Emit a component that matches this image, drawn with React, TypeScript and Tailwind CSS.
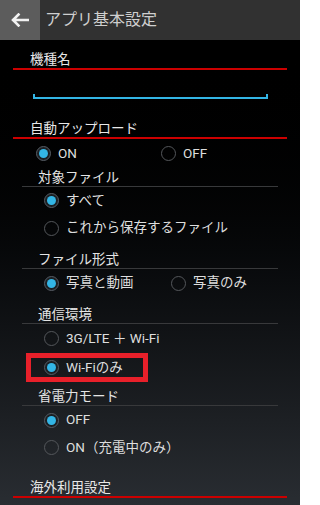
const FONT = { fontFamily: 'Roboto, "Noto Sans CJK JP", sans-serif' };

function Radio({ checked }: { checked?: boolean }) {
  if (checked) {
    return (
      <span className="w-[15px] h-[15px] shrink-0 rounded-full border border-[#565c64] bg-[#1b1f23] flex items-center justify-center">
        <span className="w-[9px] h-[9px] rounded-full bg-[#33b5e5]" />
      </span>
    );
  }
  return <span className="w-[15px] h-[15px] shrink-0 rounded-full border border-[#54575b]" />;
}

function Option({ label, checked }: { label: string; checked?: boolean }) {
  return (
    <span className="flex items-center gap-[7px]">
      <Radio checked={checked} />
      <span className="text-[13.5px] text-[#dedede] leading-none">{label}</span>
    </span>
  );
}

// red underlined section heading
function Section({ title, className = '' }: { title: string; className?: string }) {
  return (
    <div className={className}>
      <div className="pl-[30px] text-[13.5px] leading-[18px] text-[#e8e8e8]">{title}</div>
      <div className="mx-[13px] h-[2px] bg-[#cc0000]" />
    </div>
  );
}

// grey underlined sub heading
function SubHeading({ title, className = '' }: { title: string; className?: string }) {
  return (
    <div className={className}>
      <div className="pl-[38px] text-[13.5px] leading-[18px] text-[#e4e4e4]">{title}</div>
      <div className="ml-[22px] mr-[22px] h-px bg-[#38393b]" />
    </div>
  );
}

export default function App() {
  return (
    <div className="w-[300px] h-[505px] overflow-hidden flex flex-col" style={FONT}>
      {/* Action bar */}
      <div className="h-[40px] shrink-0 flex bg-[#313131]">
        <div className="w-[40px] h-full bg-[#5c5c5c] flex items-center justify-center">
          <svg width="18" height="14" viewBox="0 0 18 14" fill="none">
            <path d="M17 7H2.5M7.5 1.5L2 7l5.5 5.5" stroke="#f2f2f2" strokeWidth="2.6" strokeLinecap="square" />
          </svg>
        </div>
        <div className="flex items-center pl-[5px] text-[16px] text-[#cfcfcf]">アプリ基本設定</div>
      </div>

      {/* Content */}
      <div className="flex-1 bg-gradient-to-b from-[#000000] to-[#292d32]">
        <Section title="機種名" className="mt-[10px]" />

        <div className="mt-[24px] ml-[33px] mr-[32px] h-[5px] border-x-2 border-b-2 border-[#33b5e5]" />

        <Section title="自動アップロード" className="mt-[20px]" />
        <div className="h-[29px] flex items-center pl-[36px]">
          <div className="w-[125px]"><Option label="ON" checked /></div>
          <Option label="OFF" />
        </div>

        <SubHeading title="対象ファイル" />
        <div className="h-[27px] flex items-center pl-[44px]"><Option label="すべて" checked /></div>
        <div className="h-[28px] flex items-center pl-[44px]"><Option label="これから保存するファイル" /></div>

        <SubHeading title="ファイル形式" className="mt-[8px]" />
        <div className="h-[28px] flex items-center pl-[44px]">
          <div className="w-[127px]"><Option label="写真と動画" checked /></div>
          <Option label="写真のみ" />
        </div>

        <SubHeading title="通信環境" className="mt-[8px]" />
        <div className="h-[29px] flex items-center pl-[44px]"><Option label="3G/LTE ＋ Wi-Fi" /></div>
        <div className="h-[29px] w-[122px] ml-[26px] border-[5px] border-[#e8202a] flex items-center pl-[13px]">
          <Option label="Wi-Fiのみ" checked />
        </div>

        <SubHeading title="省電力モード" className="mt-[5px]" />
        <div className="h-[28px] flex items-center pl-[44px]"><Option label="OFF" checked /></div>
        <div className="h-[27px] flex items-center pl-[44px]"><Option label="ON（充電中のみ）" /></div>

        <Section title="海外利用設定" className="mt-[17px]" />
      </div>
    </div>
  );
}
